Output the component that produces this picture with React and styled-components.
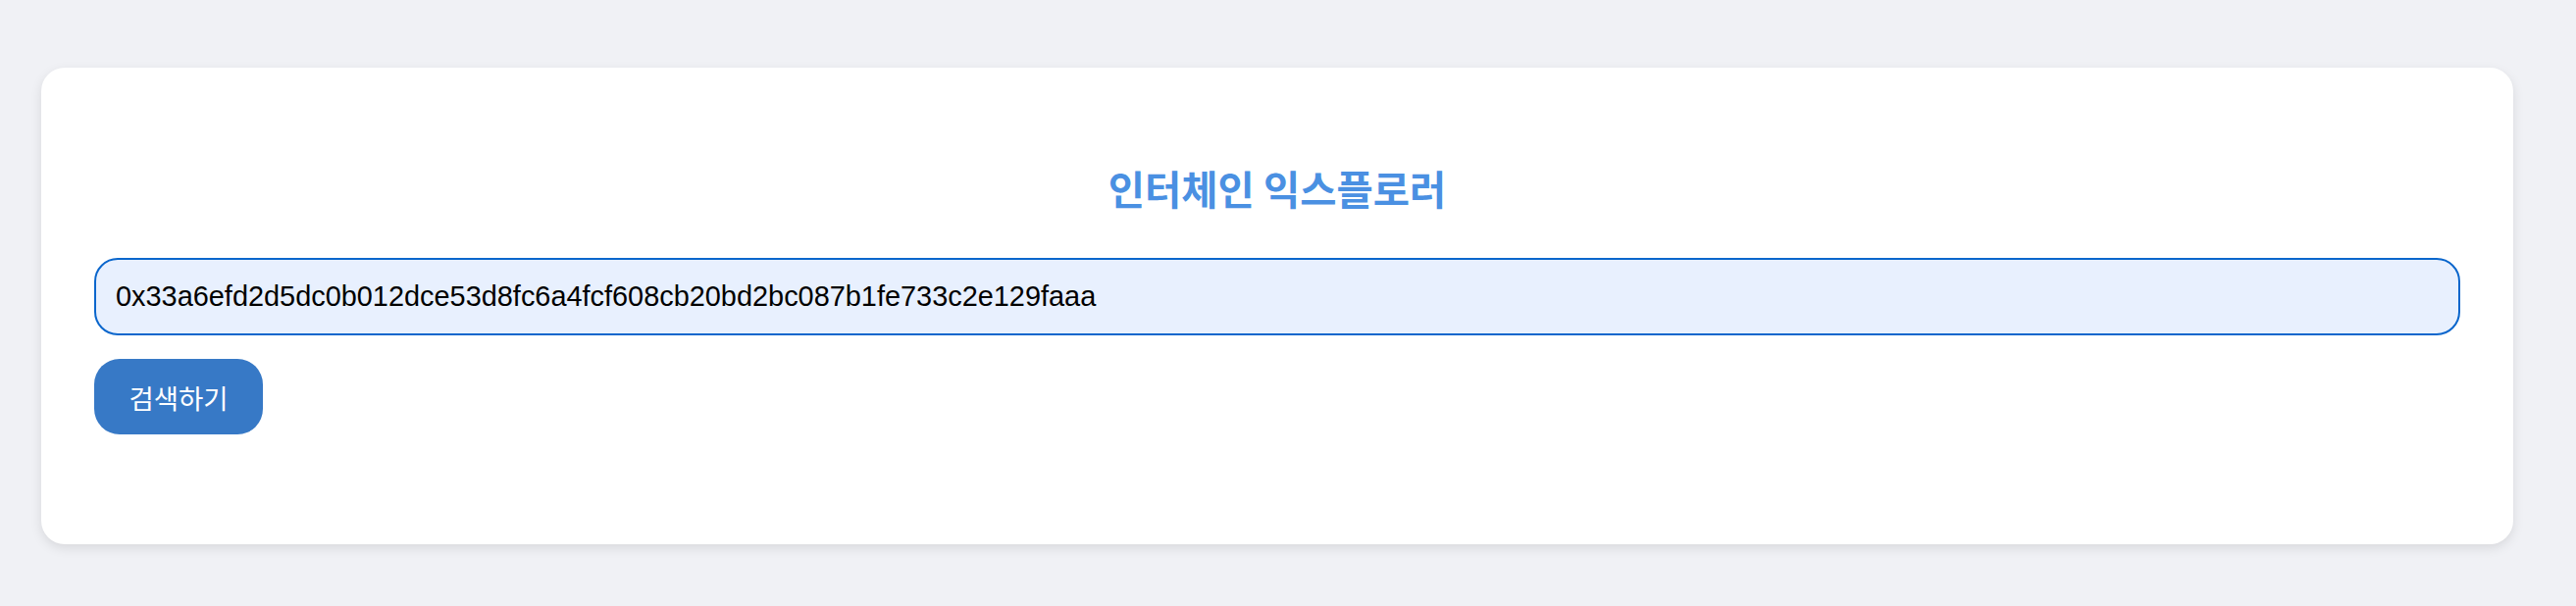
import React, { useEffect, useRef, useState } from 'react';
import styled, { createGlobalStyle } from 'styled-components';

const GlobalStyle = createGlobalStyle`
  body {
    margin: 0;
    background: #f0f1f5;
    font-family: "Liberation Sans", "Noto Sans CJK KR", sans-serif;
  }
`;

const Page = styled.div`
  padding: 69px 64px 63px 42px;
`;

const Card = styled.section`
  background: #ffffff;
  border-radius: 24px;
  box-shadow: 0 4px 12px rgba(0, 0, 0, 0.1);
  padding: 99px 54px 112px;
  display: flex;
  flex-direction: column;
`;

const Title = styled.h2`
  margin: 0 0 47px;
  text-align: center;
  color: #4a90e2;
  font-family: "Noto Sans CJK KR", sans-serif;
  font-weight: 700;
  font-size: 40.5px;
  line-height: 48px;
`;

const SearchInput = styled.input`
  box-sizing: border-box;
  width: 100%;
  height: 79px;
  padding: 0 20px;
  border: 2px solid #0a66cc;
  border-radius: 24px;
  background: #e8f0fe;
  color: #000;
  font-family: "Liberation Sans", sans-serif;
  font-size: 28.9px;
  outline: none;
`;

const SearchButton = styled.button`
  align-self: flex-start;
  margin-top: 24px;
  width: 172px;
  height: 77px;
  border: none;
  border-radius: 26px;
  background: #3779c6;
  color: #ffffff;
  font-family: "Noto Sans CJK KR", sans-serif;
  font-size: 27.5px;
  cursor: pointer;
`;

const App = () => {
  const [hash, setHash] = useState('0x33a6efd2d5dc0b012dce53d8fc6a4fcf608cb20bd2bc087b1fe733c2e129faaa');
  const inputRef = useRef(null);

  useEffect(() => {
    const el = inputRef.current;
    if (el) {
      el.focus();
      el.setSelectionRange(el.value.length, el.value.length);
    }
  }, []);

  return (
    <>
      <GlobalStyle />
      <Page>
        <Card>
          <Title>인터체인 익스플로러</Title>
          <SearchInput ref={inputRef} value={hash} onChange={(e) => setHash(e.target.value)} />
          <SearchButton>검색하기</SearchButton>
        </Card>
      </Page>
    </>
  );
};

export default App;
